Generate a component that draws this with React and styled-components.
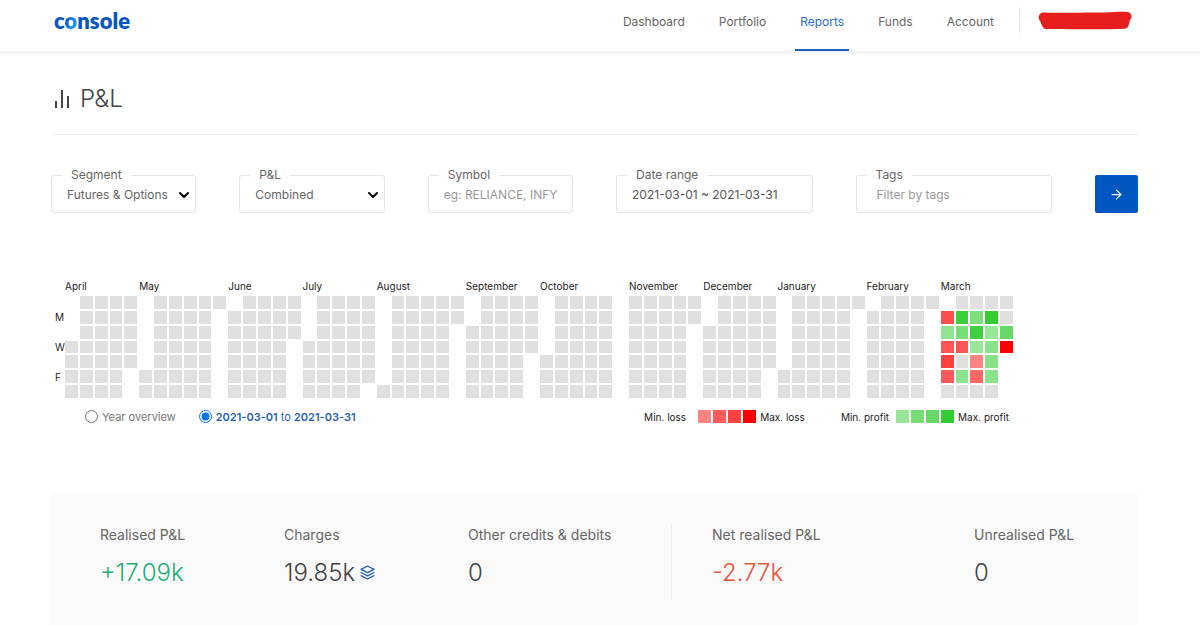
import * as React from "react";
import styled, { createGlobalStyle, css } from "styled-components";
import { ArrowRight, ChevronDown } from "lucide-react";

const GlobalStyle = createGlobalStyle`
  *, *::before, *::after {
    box-sizing: border-box;
  }
  body {
    margin: 0;
    background: #fff;
    color: #444;
    font-family: Inter, "Liberation Sans", sans-serif;
    font-size: 12px;
    line-height: 16px;
  }
  button, input, select {
    font: inherit;
  }
`;

const Container = styled.div`
  max-width: 1280px;
  margin: 0 auto;
  padding: 0 62px 0 51px;
`;

const Header = styled.header`
  background: #fff;
  border-bottom: 1px solid #f1f1f1;
  box-shadow: 0 1px 4px rgba(0, 0, 0, 0.08);
`;

const HeaderRow = styled(Container)`
  display: flex;
  justify-content: space-between;
  padding-right: 68px;
`;

const Logo = styled.a`
  padding: 9px 0 0 3px;
  color: #0a56c2;
  font-family: Lato, sans-serif;
  font-size: 22px;
  font-weight: 800;
  line-height: 24px;
  text-decoration: none;
`;

const LogoRing = styled.span`
  background: linear-gradient(110deg, #0a56c2 20%, #1e9bf5 80%);
  background-clip: text;
  color: transparent;
`;

const HeaderEnd = styled.div`
  display: flex;
  gap: 20px;
`;

const Nav = styled.nav`
  display: flex;
  gap: 24px;
`;

const NavLink = styled.a`
  height: 51px;
  padding: 14px 5px 0;
  border-bottom: 2px solid ${({ $active }) => ($active ? "#1a5fb8" : "transparent")};
  color: ${({ $active }) => ($active ? "#2a6ccf" : "#666")};
  text-decoration: none;
`;

const User = styled.div`
  height: 30px;
  margin-top: 7px;
  padding: 4px 0 0 18px;
  border-left: 1px solid #eee;
`;

const TitleBar = styled.div`
  display: flex;
  align-items: center;
  gap: 10px;
  height: 83px;
  padding: 11px 0 0 4px;
  border-bottom: 1px solid #eee;
`;

const Title = styled.h1`
  margin: 0;
  font-size: 24px;
  font-weight: 300;
  line-height: 32px;
`;

const Filters = styled.form`
  display: grid;
  grid-template-columns: repeat(3, 145fr) repeat(2, 196fr) 43px;
  align-items: end;
  gap: 43px;
  padding-top: 32px;
`;

const Field = styled.fieldset`
  display: grid;
  align-items: center;
  min-width: 0;
  height: 46px;
  margin: 0;
  padding: 0 0 6px;
  border: 1px solid #e4e4e4;
  border-radius: 3px;
`;

const Legend = styled.legend`
  margin-left: 10px;
  padding: 0 9px;
  color: #666;
`;

const control = css`
  grid-area: 1 / 1;
  width: 100%;
  height: 20px;
  padding: 0 4px 0 ${({ $inset }) => $inset || 15}px;
  border: 0;
  background: transparent;
  color: #666;
`;

const Input = styled.input`
  ${control}
  color: #555;

  &::placeholder {
    color: #999;
  }
`;

const Select = styled.select`
  ${control}
  appearance: none;
`;

const Chevron = styled(ChevronDown)`
  grid-area: 1 / 1;
  justify-self: end;
  margin-right: 3px;
  color: #000;
  pointer-events: none;
`;

const Submit = styled.button`
  display: grid;
  place-items: center;
  height: 38px;
  padding: 0;
  border: 0;
  border-radius: 2px;
  background: #0057c1;
  color: #fff;
`;

const Overview = styled.section`
  max-width: 962px;
  padding: 66px 0 0 4px;
`;

const Calendar = styled.div`
  display: grid;
  grid-template-columns: 8px repeat(64, minmax(0, 1fr));
  gap: 2px;
  color: #222;
  font-size: 10px;
`;

const MonthName = styled.span`
  grid-row: 1;
  grid-column: ${({ $col }) => $col} / span 5;
  height: 15px;
  line-height: 14px;
  white-space: nowrap;
`;

const WeekDay = styled.span`
  grid-row: ${({ $row }) => $row};
  grid-column: 1;
  align-self: center;
  line-height: 12px;
`;

const Day = styled.span`
  grid-row: ${({ $row }) => $row};
  grid-column: ${({ $col }) => $col};
  aspect-ratio: 1;
  background: ${({ $color }) => $color || "#e0e0e0"};
`;

const Footer = styled.div`
  display: flex;
  justify-content: space-between;
  padding: 11px 4px 0 30px;
`;

const Ranges = styled.div`
  display: flex;
  gap: 23px;
`;

const Range = styled.label`
  display: flex;
  align-items: center;
  gap: 4px;
  color: ${({ $active }) => ($active ? "#2a5fb0" : "#777")};
  font-size: 11px;

  input {
    width: 13px;
    height: 13px;
    margin: 0;
  }
  b {
    font-weight: 600;
  }
`;

const Scales = styled.div`
  display: flex;
  gap: 36px;
`;

const Scale = styled.div`
  display: flex;
  align-items: center;
  gap: 2px;
  color: #222;
  font-size: 10px;
`;

const ScaleStart = styled.span`
  padding-right: ${({ $space }) => $space}px;
`;

const ScaleEnd = styled.span`
  padding-left: 2px;
`;

const Swatch = styled.span`
  width: 13px;
  height: 13px;
  background: ${({ $color }) => $color};
`;

const Summary = styled.section`
  display: grid;
  grid-template-columns: 620fr 467fr;
  margin-top: 69px;
  padding: 30px 0 25px;
  background: #fafafa;
`;

const Group = styled.dl`
  display: grid;
  grid-template-columns: ${({ $columns }) => $columns};
  height: 76px;
  margin: 0;
  padding-left: ${({ $inset }) => $inset}px;

  & + & {
    border-left: 1px solid #eee;
  }
`;

const StatName = styled.dt`
  margin-top: 2px;
  color: #666;
  font-size: 14px;
  line-height: 18px;
`;

const StatValue = styled.dd`
  display: flex;
  align-items: center;
  gap: 5px;
  margin: 13px 0 0;
  color: ${({ $color }) => $color || "#444"};
  font-size: 24px;
  font-weight: 300;
  line-height: 32px;
`;

const RED = ["#ff8585", "#ff5a5a", "#ff4141", "#ff0000"];
const GREEN = ["#99e699", "#77dd77", "#66d966", "#33cc33"];

// col is the first week column of the month, start its first weekday (0 is Sunday)
const MONTHS = [
  { name: "April", col: 0, start: 3, days: 30 },
  { name: "May", col: 5, start: 5, days: 31 },
  { name: "June", col: 11, start: 1, days: 30 },
  { name: "July", col: 16, start: 3, days: 31 },
  { name: "August", col: 21, start: 6, days: 31 },
  { name: "September", col: 27, start: 2, days: 30 },
  { name: "October", col: 32, start: 4, days: 31 },
  { name: "November", col: 38, start: 0, days: 30 },
  { name: "December", col: 43, start: 2, days: 31 },
  { name: "January", col: 48, start: 5, days: 31 },
  { name: "February", col: 54, start: 1, days: 28 },
  {
    name: "March",
    col: 59,
    start: 1,
    days: 31,
    colors: {
      1: "#fd4f4f", 2: "#90e490", 3: "#ff5454", 4: "#fd4040", 5: "#ff5a5a",
      8: "#3bd03b", 9: "#77dd77", 10: "#ff5555", 12: "#8be48b",
      15: "#7cdf7c", 16: "#3fd03f", 17: "#9ce69c", 18: "#ff8585", 19: "#ff6666",
      22: "#33cc33", 23: "#96e896", 24: "#8ae28a", 25: "#88e288", 26: "#8be48b",
      30: "#66d866", 31: "#ff0000",
    },
  },
];

const SelectField = ({ id, label, value }) => (
  <Field>
    <Legend><label htmlFor={id}>{label}</label></Legend>
    <Select id={id}>
      <option>{value}</option>
    </Select>
    <Chevron size={16} strokeWidth={3} />
  </Field>
);

const InputField = ({ id, label, inset, ...props }) => (
  <Field>
    <Legend><label htmlFor={id}>{label}</label></Legend>
    <Input id={id} $inset={inset} {...props} />
  </Field>
);

const Month = ({ name, col, start, days, colors = {} }) => (
  <>
    <MonthName $col={col + 2}>{name}</MonthName>
    {Array.from({ length: days }, (_, i) => (
      <Day
        key={i}
        $row={((start + i) % 7) + 2}
        $col={col + Math.floor((start + i) / 7) + 2}
        $color={colors[i + 1]}
      />
    ))}
  </>
);

const ColorScale = ({ from, to, space, colors }) => (
  <Scale>
    <ScaleStart $space={space}>{from}</ScaleStart>
    {colors.map(color => <Swatch key={color} $color={color} />)}
    <ScaleEnd>{to}</ScaleEnd>
  </Scale>
);

const Stat = ({ name, color, children }) => (
  <div>
    <StatName>{name}</StatName>
    <StatValue $color={color}>{children}</StatValue>
  </div>
);

const BarsIcon = () => (
  <svg width="15" height="18" viewBox="0 0 15 18" stroke="#444" strokeWidth="2" aria-hidden="true">
    <path d="M1 11v7M7 0v18M13 6v12" />
  </svg>
);

const LayersIcon = () => (
  <svg width="15" height="15" viewBox="0 0 15 15" fill="none" stroke="#1f5cba" strokeWidth="1.3" strokeLinejoin="round" strokeLinecap="round" aria-hidden="true">
    <path d="M7.500 1l6.500 3.300-6.500 3.300L1 4.300zM1 7.500l6.500 3.300L14 7.500M1 10.700l6.500 3.300 6.500-3.300" />
  </svg>
);

const Scribble = () => (
  <svg width="94" height="19" viewBox="0 0 94 19" fill="#e61e1c" aria-hidden="true">
    <path d="M5 1.500C25 2 50 1.500 68 1.500C76 1 84 0.500 90 1C94 2 94.500 7 92 9C91 12 91 17 87 17.800C60 18.800 30 18 8 18C4 17.500 4 13 2 10C-0.500 7 0.500 2 5 1.500Z" />
  </svg>
);

const App = () => (
  <>
    <GlobalStyle />
    <Header>
      <HeaderRow>
        <Logo href="#">c<LogoRing>o</LogoRing>nsole</Logo>
        <HeaderEnd>
          <Nav>
            <NavLink href="#dashboard">Dashboard</NavLink>
            <NavLink href="#portfolio">Portfolio</NavLink>
            <NavLink href="#reports" $active>Reports</NavLink>
            <NavLink href="#funds">Funds</NavLink>
            <NavLink href="#account">Account</NavLink>
          </Nav>
          <User><Scribble /></User>
        </HeaderEnd>
      </HeaderRow>
    </Header>
    <Container as="main">
      <TitleBar>
        <BarsIcon />
        <Title>P&amp;L</Title>
      </TitleBar>
      <Filters onSubmit={e => e.preventDefault()}>
        <SelectField id="segment" label="Segment" value="Futures & Options" />
        <SelectField id="pnl" label="P&L" value="Combined" />
        <InputField id="symbol" label="Symbol" placeholder="eg: RELIANCE, INFY" />
        <InputField id="range" label="Date range" defaultValue="2021-03-01 ~ 2021-03-31" />
        <InputField id="tags" label="Tags" inset={20} placeholder="Filter by tags" />
        <Submit aria-label="Apply"><ArrowRight size={15} /></Submit>
      </Filters>
      <Overview>
        <Calendar>
          <WeekDay $row={3}>M</WeekDay>
          <WeekDay $row={5}>W</WeekDay>
          <WeekDay $row={7}>F</WeekDay>
          {MONTHS.map(month => <Month key={month.name} {...month} />)}
        </Calendar>
        <Footer>
          <Ranges>
            <Range>
              <input type="radio" name="view" />
              Year overview
            </Range>
            <Range $active>
              <input type="radio" name="view" defaultChecked />
              <span><b>2021-03-01</b> to <b>2021-03-31</b></span>
            </Range>
          </Ranges>
          <Scales>
            <ColorScale from="Min. loss" to="Max. loss" space={10} colors={RED} />
            <ColorScale from="Min. profit" to="Max. profit" space={5} colors={GREEN} />
          </Scales>
        </Footer>
      </Overview>
      <Summary>
        <Group $columns="184fr 184fr 203fr" $inset={49}>
          <Stat name="Realised P&L" color="#1fae74">+17.09k</Stat>
          <Stat name="Charges">19.85k<LayersIcon /></Stat>
          <Stat name="Other credits & debits">0</Stat>
        </Group>
        <Group $columns="262fr 164fr" $inset={40}>
          <Stat name="Net realised P&L" color="#e8553a">-2.77k</Stat>
          <Stat name="Unrealised P&L">0</Stat>
        </Group>
      </Summary>
    </Container>
  </>
);

export default App;
